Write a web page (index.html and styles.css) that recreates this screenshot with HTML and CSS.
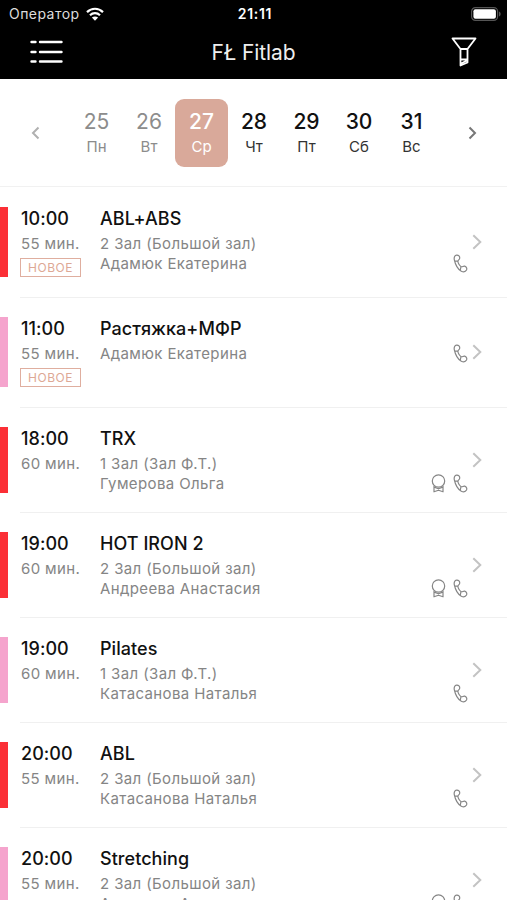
FILE: index.html
```html
<!DOCTYPE html>
<html lang="ru">
<head>
<meta charset="utf-8">
<title>FŁ Fitlab</title>
<link rel="stylesheet" href="styles.css">
</head>
<body>
<svg class="defs" width="0" height="0">
  <symbol id="phone" viewBox="0 0 15 19"><path d="M1.400 6.200C.7 3.300 1.700 1.300 3.600 1.100 5.600.9 6.900 2.300 6.700 4.200 6.500 5.900 4.800 6 4.900 7.500 5 9.200 6.800 12.200 8.300 12.700 9.600 13.100 10.200 11.800 11.700 12.200 13.500 12.700 14.200 14.500 13.500 16 12.600 17.700 10.300 18.100 8.300 17.200 4.900 15.600 2.200 10.200 1.400 6.200zM1.700 7.100 5 6.900M8 12.700l-.8 3.600"/></symbol>
  <symbol id="award" viewBox="0 0 15 19"><circle cx="7.500" cy="7" r="6.200"/><path d="M3 11.800v6l4.500-1.500 4.500 1.500v-6M3.200 13.100l4.300 1.700 4.300-1.700"/></symbol>
  <symbol id="next" viewBox="0 0 10 16"><path d="M1.300 1.300 8.300 8l-7 6.700"/></symbol>
</svg>
<div class="app">
  <header class="top">
    <div class="status">
      <div class="carrier"><span>Оператор</span>
        <svg width="18" height="14" viewBox="0 0 18 14" fill="none" stroke="#fff" stroke-width="2.200"><path d="M1 5.100C5.600.6 12.400.6 17 5.100M4 8.200c2.900-2.800 7.100-2.800 10 0"/><path fill="#fff" stroke="none" d="M5.900 10.600c1.700-1.500 4.500-1.500 6.200 0L9 13.700z"/></svg>
      </div>
      <div class="clock">21:11</div>
      <svg class="battery" width="30" height="14" viewBox="0 0 30 14"><rect x=".6" y=".6" width="26" height="12.800" rx="3.800" fill="none" stroke="#555" stroke-width="1.200"/><rect x="2.400" y="2.300" width="22.500" height="9.400" rx="2" fill="#fff"/><path d="M28 4.600c2.200.8 2.200 4 0 4.800z" fill="#555"/></svg>
    </div>
    <div class="nav">
      <svg width="33" height="24" viewBox="0 0 33 24" fill="none" stroke="#fff" stroke-width="2.400" stroke-linecap="round"><path d="M1.500 2h4M10 2h21.500M1.500 12h4M10 12h21.500M1.500 21.500h4M10 21.500h21.500"/></svg>
      <h1>FŁ Fitlab</h1>
      <svg class="filter" width="26" height="30" viewBox="0 0 26 30" fill="none" stroke="#fff" stroke-width="1.800" stroke-linejoin="round"><path d="M1.500 1.500h23l-8 10.500v13.500l-7 3V12zM9.500 12h7M9.500 22.500h7M10 26.500l6-3"/></svg>
    </div>
  </header>
  <section class="week">
    <svg class="arrow prev" width="9" height="14" viewBox="0 0 9 14"><path d="M7.500 1.500 2 7l5.500 5.500"/></svg>
    <div class="days">
      <div class="day past"><b>25</b><span>Пн</span></div>
      <div class="day past"><b>26</b><span>Вт</span></div>
      <div class="day active"><b>27</b><span>Ср</span></div>
      <div class="day"><b>28</b><span>Чт</span></div>
      <div class="day"><b>29</b><span>Пт</span></div>
      <div class="day"><b>30</b><span>Сб</span></div>
      <div class="day"><b>31</b><span>Вс</span></div>
    </div>
    <svg class="arrow" width="9" height="14" viewBox="0 0 9 14"><path d="M1.500 1.500 7 7l-5.500 5.500"/></svg>
  </section>
  <main>
    <article class="row tall red">
      <div class="when"><h2>10:00</h2><p>55 мин.</p><span class="badge">НОВОЕ</span></div>
      <div class="what"><h2>ABL+ABS</h2><p>2 Зал (Большой зал)</p><div class="coach"><p>Адамюк Екатерина</p><svg class="icon"><use href="#phone"/></svg></div></div>
      <svg class="next"><use href="#next"/></svg>
    </article>
    <article class="row tall pink">
      <div class="when"><h2>11:00</h2><p>55 мин.</p><span class="badge">НОВОЕ</span></div>
      <div class="what"><h2>Растяжка+МФР</h2><div class="coach"><p>Адамюк Екатерина</p><svg class="icon"><use href="#phone"/></svg></div></div>
      <svg class="next"><use href="#next"/></svg>
    </article>
    <article class="row red">
      <div class="when"><h2>18:00</h2><p>60 мин.</p></div>
      <div class="what"><h2>TRX</h2><p>1 Зал (Зал Ф.Т.)</p><div class="coach"><p>Гумерова Ольга</p><svg class="icon"><use href="#award"/></svg><svg class="icon"><use href="#phone"/></svg></div></div>
      <svg class="next"><use href="#next"/></svg>
    </article>
    <article class="row red">
      <div class="when"><h2>19:00</h2><p>60 мин.</p></div>
      <div class="what"><h2>HOT IRON 2</h2><p>2 Зал (Большой зал)</p><div class="coach"><p>Андреева Анастасия</p><svg class="icon"><use href="#award"/></svg><svg class="icon"><use href="#phone"/></svg></div></div>
      <svg class="next"><use href="#next"/></svg>
    </article>
    <article class="row pink">
      <div class="when"><h2>19:00</h2><p>60 мин.</p></div>
      <div class="what"><h2>Pilates</h2><p>1 Зал (Зал Ф.Т.)</p><div class="coach"><p>Катасанова Наталья</p><svg class="icon"><use href="#phone"/></svg></div></div>
      <svg class="next"><use href="#next"/></svg>
    </article>
    <article class="row red">
      <div class="when"><h2>20:00</h2><p>55 мин.</p></div>
      <div class="what"><h2>ABL</h2><p>2 Зал (Большой зал)</p><div class="coach"><p>Катасанова Наталья</p><svg class="icon"><use href="#phone"/></svg></div></div>
      <svg class="next"><use href="#next"/></svg>
    </article>
    <article class="row pink">
      <div class="when"><h2>20:00</h2><p>55 мин.</p></div>
      <div class="what"><h2>Stretching</h2><p>2 Зал (Большой зал)</p><div class="coach"><p>Андреева Анастасия</p><svg class="icon"><use href="#award"/></svg><svg class="icon"><use href="#phone"/></svg></div></div>
      <svg class="next"><use href="#next"/></svg>
    </article>
  </main>
</div>
</body>
</html>
```
FILE: styles.css
```css
* { box-sizing: border-box; margin: 0; padding: 0; }
body { background: #fff; color: #111; font-family: Inter, "Liberation Sans", sans-serif; overflow: hidden; }
svg { display: block; flex: none; }
.defs { display: none; }
.app { width: 507px; height: 900px; overflow: hidden; }
.top { height: 79px; background: #000; color: #fff; }
.status { height: 27px; display: grid; grid-template-columns: 1fr auto 1fr; align-items: center; padding: 0 6px 0 9px; }
.carrier { display: flex; align-items: center; gap: 6px; font-size: 14px; line-height: 18px; color: #ddd; letter-spacing: .45px; }
.clock { font-size: 14px; font-weight: 600; letter-spacing: .7px; }
.battery { justify-self: end; }
.nav { height: 50px; display: grid; grid-template-columns: 1fr auto 1fr; align-items: center; padding: 0 30px; }
.nav h1 { font-size: 21px; font-weight: 400; line-height: 28px; padding-top: 2px; letter-spacing: -.1px; color: #eee; }
.filter { justify-self: end; }
.week { height: 108px; display: flex; align-items: center; padding: 0 30px 0 31px; border-bottom: 1px solid #f1f1f1; }
.arrow { fill: none; stroke: #777; stroke-width: 2; }
.prev { stroke: #b0b0b0; }
.days { flex: 1; display: grid; grid-template-columns: repeat(7, 52.5px); justify-content: center; }
.day { height: 68px; display: flex; flex-direction: column; align-items: center; padding-top: 9px; border-radius: 9px; }
.day b { font-size: 21px; font-weight: 500; line-height: 28px; }
.day span { font-size: 15px; line-height: 22px; color: #333; }
.past b, .past span { color: #8c8c8c; font-weight: 400; }
.active { background: #d9a99a; }
.active b, .active span { color: #fff; }
.row { height: 105px; display: grid; grid-template-columns: 8px 92px 368px 16px; padding-top: 20px; }
.row::before { content: ""; width: 8px; height: 66px; background: var(--tone); }
.tall { height: 110px; }
.tall::before { height: 70px; }
.red { --tone: #fb2f36; }
.pink { --tone: #f5a4cd; }
.row + .row { background: linear-gradient(#f0f0f0, #f0f0f0) 20px 0 / 487px 1px no-repeat; }
.when { padding-left: 13px; }
.row h2 { font-size: 18px; font-weight: 500; line-height: 24px; margin-bottom: 3px; letter-spacing: .05px; white-space: nowrap; }
.row p { font-size: 15px; line-height: 20px; color: #858585; letter-spacing: .38px; white-space: nowrap; }
.badge { display: block; width: 61px; height: 19px; margin: 4px 0 0 -1px; border: 1px solid #dfae9f; color: #dda895; font-size: 12px; line-height: 18px; text-align: center; letter-spacing: .5px; }
.coach { display: flex; align-items: center; gap: 7px; height: 20px; }
.coach p { flex: 1; }
.icon { width: 15px; height: 19px; margin-top: -1px; fill: none; stroke: #858585; stroke-width: 1.200; stroke-linejoin: round; }
.next { width: 10px; height: 16px; margin: 25px 0 0 4px; fill: none; stroke: #c3c3c3; stroke-width: 2; }
.tall .next { margin-top: 27px; }
```
